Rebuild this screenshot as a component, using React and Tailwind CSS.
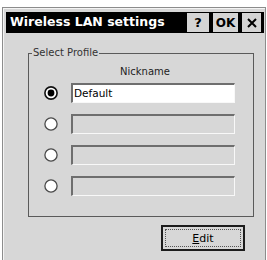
import React from "react";

const font = { fontFamily: '"DejaVu Sans", "Liberation Sans", sans-serif' };

function Radio({ checked }) {
  return (
    <svg width="14" height="14" viewBox="0 0 14 14" className="shrink-0">
      <circle cx="7" cy="7" r="6.1" fill="#ffffff" stroke={checked ? "#111111" : "#4a4a4a"} strokeWidth={checked ? 1.6 : 1.3} />
      {checked && <circle cx="7" cy="7" r="3.4" fill="#000000" />}
    </svg>
  );
}

function Row({ checked, value }) {
  return (
    <div className="flex items-center pl-[15px] gap-[13px] h-[20px]">
      <Radio checked={checked} />
      <div
        className={`w-[164px] h-[20px] border-t-2 border-l-2 border-t-[#6e6e6e] border-l-[#6e6e6e] border-b border-r border-b-[#f8f8f8] border-r-[#f8f8f8] flex items-center pl-[1px] text-[10.5px] text-black ${
          checked ? "bg-white" : "bg-[#d7d7d7]"
        }`}
      >
        {value}
      </div>
    </div>
  );
}

export default function App() {
  return (
    <div className="w-[267px] h-[260px] bg-white overflow-hidden pt-[7px] pl-[2px]" style={font}>
      <div className="w-[264px] h-[253px] border-l border-t border-r border-[#8c8c8c] bg-[#d7d7d7] shadow-[inset_1px_1px_0_#f4f4f4] flex flex-col pt-[4px] pl-[3px]">
        <div className="w-[258px] h-[21px] bg-black flex items-center">
          <span className="pl-[4px] text-[12.5px] font-bold text-white leading-none">Wireless LAN settings</span>
          <div className="ml-auto flex gap-[4px] pr-[3px]">
            <div className="w-[22px] h-[19px] bg-[#d4d4d4] flex items-center justify-center text-[13px] font-bold text-black leading-none">?</div>
            <div className="w-[25px] h-[19px] bg-[#d4d4d4] flex items-center justify-center text-[12px] font-bold text-black leading-none">OK</div>
            <div className="w-[19px] h-[19px] bg-[#d4d4d4] flex items-center justify-center">
              <svg width="10" height="10" viewBox="0 0 10 10">
                <path d="M1 1 L9 9 M9 1 L1 9" stroke="#000" strokeWidth="2" />
              </svg>
            </div>
          </div>
        </div>

        <fieldset className="ml-[22px] mt-[14px] w-[226px] border border-[#5a5a5a] pt-[6px] pb-[20px]">
          <legend className="ml-[3px] px-[1px] text-[10px] leading-[12px] text-[#333333]">Select Profile</legend>
          <div className="pl-[91px] text-[10px] leading-[13px] text-[#222222] mb-[5px]">Nickname</div>
          <div className="flex flex-col gap-[11px]">
            <Row checked value="Default" />
            <Row />
            <Row />
            <Row />
          </div>
        </fieldset>

        <div className="ml-[155px] mt-[8px] w-[84px] h-[26px] border-2 border-[#1c1c1c] bg-[#d7d7d7] p-[2px]">
          <div className="w-full h-full border border-dotted border-[#555555] flex items-center justify-center text-[11px] text-black leading-none">
            <span><span className="underline">E</span>dit</span>
          </div>
        </div>
      </div>
    </div>
  );
}
